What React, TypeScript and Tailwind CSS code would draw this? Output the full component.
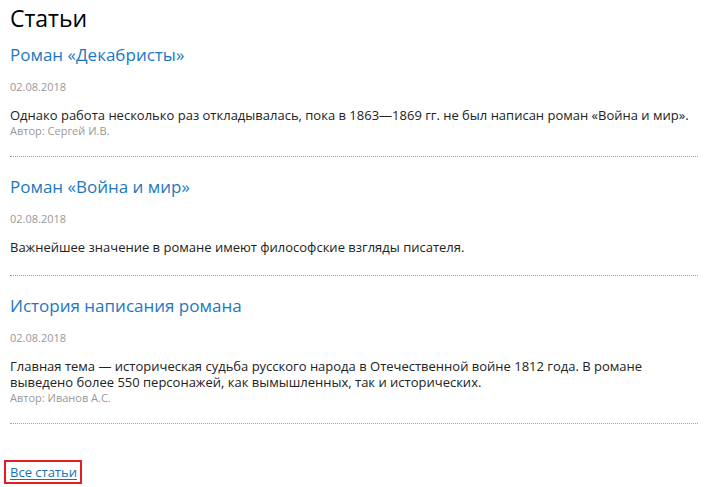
import React from "react";

const articles = [
  {
    title: "Роман «Декабристы»",
    date: "02.08.2018",
    text: "Однако работа несколько раз откладывалась, пока в 1863—1869 гг. не был написан роман «Война и мир».",
    author: "Автор: Сергей И.В.",
  },
  {
    title: "Роман «Война и мир»",
    date: "02.08.2018",
    text: "Важнейшее значение в романе имеют философские взгляды писателя.",
    author: "",
  },
  {
    title: "История написания романа",
    date: "02.08.2018",
    text: "Главная тема — историческая судьба русского народа в Отечественной войне 1812 года. В романе выведено более 550 персонажей, как вымышленных, так и исторических.",
    author: "Автор: Иванов А.С.",
  },
];

export default function App() {
  return (
    <div
      className="flex flex-col w-[710px] h-[487px] bg-white pl-[10px] pr-[12px] pt-[2px] text-[#222]"
      style={{ fontFamily: '"Open Sans", "Noto Sans", sans-serif' }}
    >
      <h1 className="text-[23px] leading-[32px] text-black">Статьи</h1>
      {articles.map((a, i) => (
        <div
          key={i}
          className={
            "border-b border-dotted border-[#a0a0a0] mb-[9px] " +
            (a.author ? "pb-[18px]" : "pb-[20px]")
          }
        >
          <h2 className="text-[17px] leading-[24px] text-[#1d78c1] mt-[9px]">{a.title}</h2>
          <div className="text-[11px] leading-[16px] text-[#999] mt-[12px]">{a.date}</div>
          <p className="text-[13px] leading-[16px] mt-[12px]">{a.text}</p>
          {a.author && (
            <div className="text-[11px] leading-[14px] text-[#999] mt-[1px]">{a.author}</div>
          )}
        </div>
      ))}
      <div className="mt-[26px] -ml-[6px]">
        <a
          href="#"
          className="inline-block border-2 border-[#e31e24] pl-[4px] pr-[3px] leading-[20px] text-[13px] text-[#1d6fb2] underline underline-offset-2"
        >
          Все статьи
        </a>
      </div>
    </div>
  );
}
